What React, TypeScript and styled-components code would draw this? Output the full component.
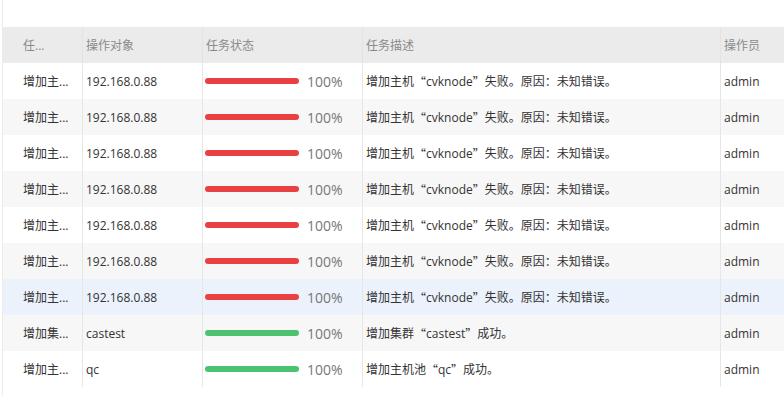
import React from 'react';
import styled, { createGlobalStyle } from 'styled-components';

const GlobalStyle = createGlobalStyle`
  html, body {
    margin: 0;
    padding: 0;
    background: #fff;
    overflow: hidden;
  }
  body {
    font-family: 'Open Sans', 'Noto Sans CJK SC', sans-serif;
  }
`;

type Task = {
  name: string;
  target: string;
  ok: boolean;
  pre: string;
  quoted: string;
  post: string;
  user: string;
};

const tasks: Task[] = [
  ...Array.from({ length: 7 }, () => ({
    name: '增加主...',
    target: '192.168.0.88',
    ok: false,
    pre: '增加主机',
    quoted: 'cvknode',
    post: '失败。原因：未知错误。',
    user: 'admin',
  })),
  { name: '增加集...', target: 'castest', ok: true, pre: '增加集群', quoted: 'castest', post: '成功。', user: 'admin' },
  { name: '增加主...', target: 'qc', ok: true, pre: '增加主机池', quoted: 'qc', post: '成功。', user: 'admin' },
];

const HIGHLIGHTED = 6;

const App = () => {
  return (
    <Page>
      <GlobalStyle />
      <Table>
        <HeaderRow>
          <HeadCell first>任...</HeadCell>
          <HeadCell>操作对象</HeadCell>
          <HeadCell>任务状态</HeadCell>
          <HeadCell>任务描述</HeadCell>
          <HeadCell last>操作员</HeadCell>
        </HeaderRow>
        {tasks.map((t, i) => (
          <Row key={i} striped={i % 2 === 1} active={i === HIGHLIGHTED}>
            <Cell first>{t.name}</Cell>
            <Cell>{t.target}</Cell>
            <Cell>
              <Progress>
                <Bar ok={t.ok} />
                <Percent>100%</Percent>
              </Progress>
            </Cell>
            <Cell>
              {t.pre}
              <Quote>“</Quote>
              {t.quoted}
              <Quote>”</Quote>
              {t.post}
            </Cell>
            <Cell last>{t.user}</Cell>
          </Row>
        ))}
      </Table>
    </Page>
  );
};

export default App;

const Page = styled.div`
  height: 396px;
  margin-left: 2px;
  border-left: 1px solid #ececec;
  padding-top: 27px;
  box-sizing: border-box;
`;

const Table = styled.div`
  display: flex;
  flex-direction: column;
  width: 781px;
`;

const columns = '80px 120px 160px 358px 1fr';

const HeaderRow = styled.div`
  display: grid;
  grid-template-columns: ${columns};
  height: 36px;
  background: #ebebeb;
`;

const Row = styled.div<{ striped?: boolean; active?: boolean }>`
  display: grid;
  grid-template-columns: ${columns};
  height: 36px;
  background: ${(p) => (p.active ? '#ebf2fc' : p.striped ? '#f7f7f7' : '#fff')};
`;

const HeadCell = styled.div<{ first?: boolean; last?: boolean }>`
  display: flex;
  align-items: center;
  box-sizing: border-box;
  padding: 0 3px;
  padding-left: ${(p) => (p.first ? '20px' : '3px')};
  border-right: ${(p) => (p.last ? 'none' : '1px solid #e3e3e3')};
  font-size: 12px;
  color: #8a8a8a;
  white-space: nowrap;
  overflow: hidden;
`;

const Cell = styled.div<{ first?: boolean; last?: boolean }>`
  display: flex;
  align-items: center;
  box-sizing: border-box;
  padding: 0 3px;
  padding-left: ${(p) => (p.first ? '20px' : '3px')};
  border-right: ${(p) => (p.last ? 'none' : '1px solid #e6e6e6')};
  font-size: 12px;
  color: #333;
  white-space: pre;
  overflow: hidden;
`;

const Quote = styled.span`
  display: inline-block;
  width: 12px;
  text-align: center;
  font-family: 'Noto Sans CJK SC', sans-serif;
`;

const Progress = styled.div`
  display: flex;
  align-items: center;
  gap: 8px;
  margin-left: -1px;
`;

const Bar = styled.div<{ ok?: boolean }>`
  width: 94px;
  height: 6px;
  border-radius: 3px;
  background: ${(p) => (p.ok ? '#4cc26e' : '#e94141')};
`;

const Percent = styled.span`
  font-size: 14px;
  color: #777;
`;
